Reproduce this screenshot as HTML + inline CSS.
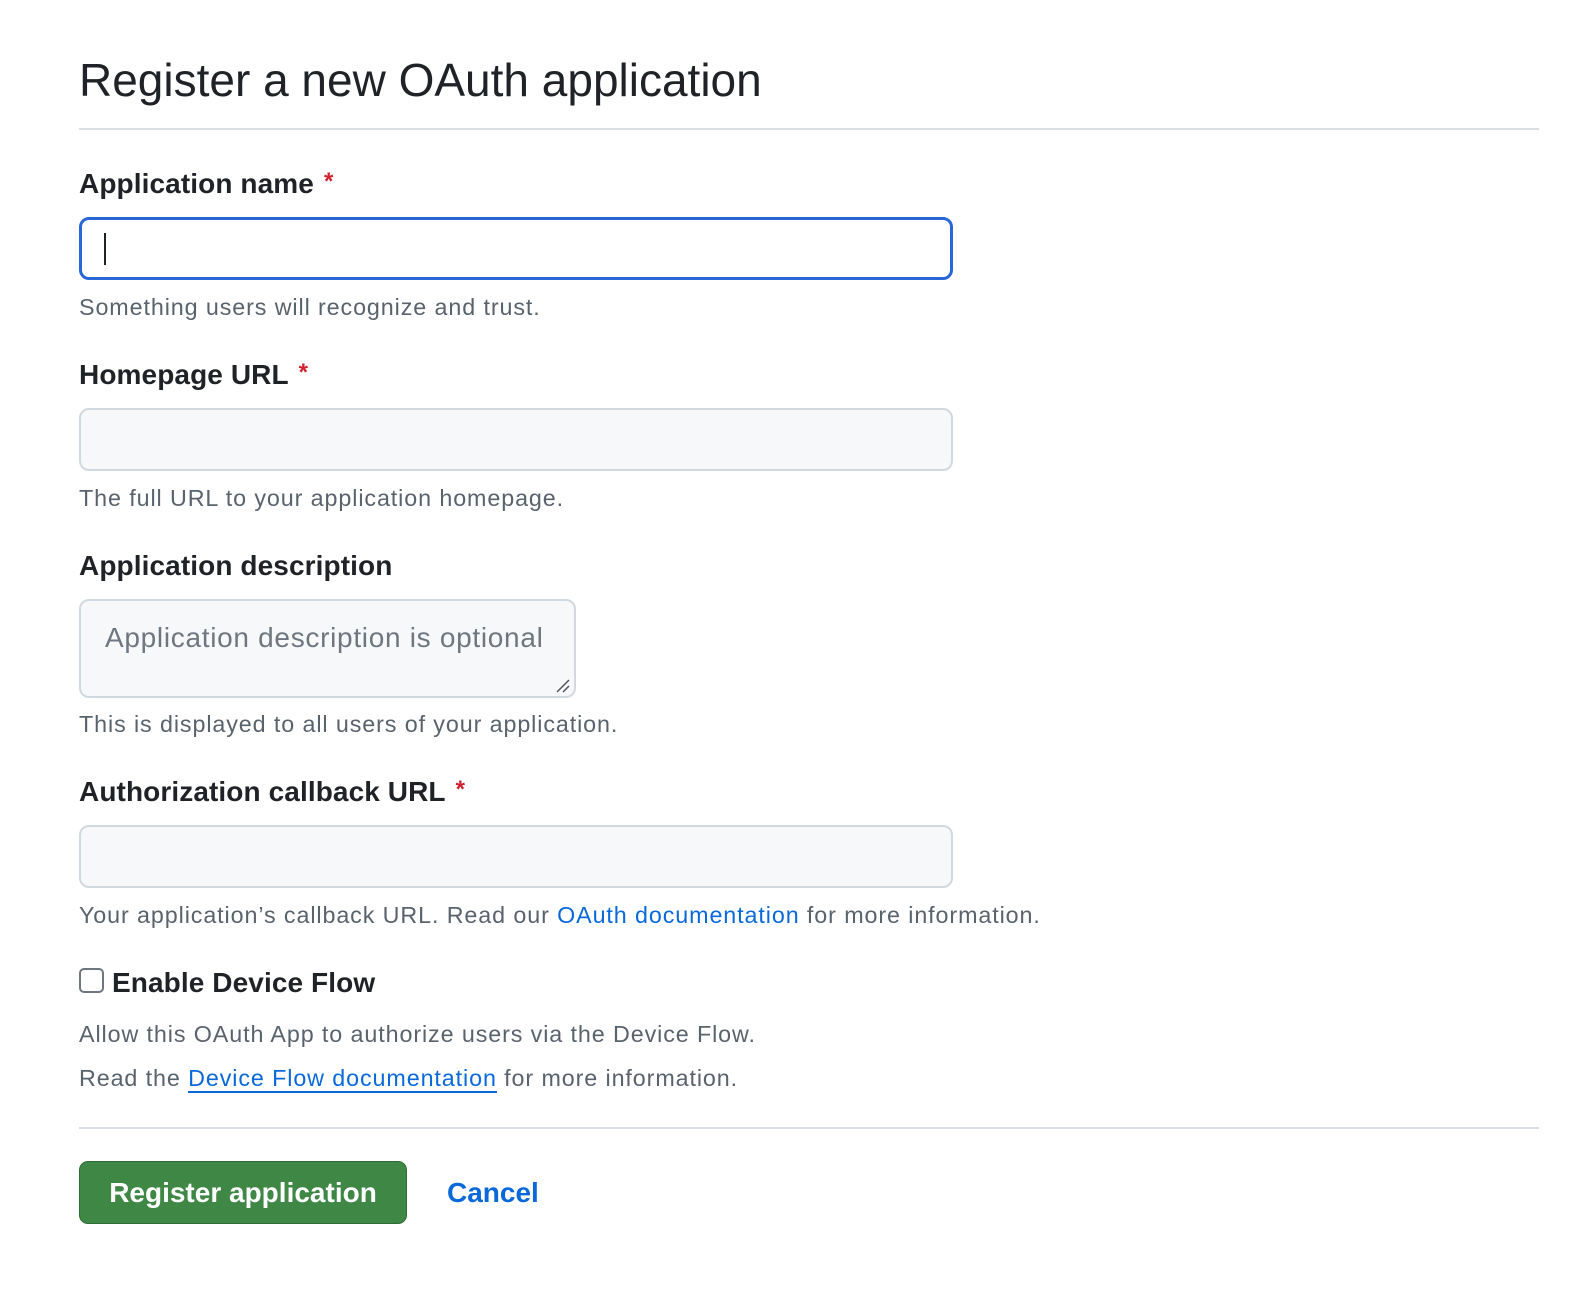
<!DOCTYPE html>
<html><head><meta charset="utf-8"><style>
*{box-sizing:border-box;margin:0;padding:0}
body{width:1578px;height:1294px;background:#fff;position:relative;overflow:hidden;font-family:"Liberation Sans",Arial,sans-serif;color:#1f2328}
.a{position:absolute;white-space:nowrap}
h1{position:absolute;left:79px;top:52px;font-size:46px;font-weight:400;line-height:56px;letter-spacing:0px}
.hr{position:absolute;left:79px;width:1460px;height:2px;background:#d8dee4}
.lbl{position:absolute;left:79px;font-size:28px;font-weight:700;line-height:36px;letter-spacing:0.1px}
.lbl i{color:#cf222e;font-style:normal;font-size:24px;margin-left:10px;position:relative;top:-4px}
.in{position:absolute;left:79px;width:874px;height:63px;background:#f6f8fa;border:2px solid #d1d9e0;border-radius:10px}
.help{position:absolute;left:79px;font-size:23.3px;line-height:30px;color:#59636e;letter-spacing:0.9px}
a{color:#0969da;text-decoration:none}
</style></head><body>
<h1>Register a new OAuth application</h1>
<div class="hr" style="top:128px"></div>

<div class="lbl" style="top:166px">Application name<i>*</i></div>
<div class="in" style="top:217px;background:#fff;border:3px solid #2a67d6"></div>
<div class="a" style="left:104px;top:233px;width:2px;height:32px;background:#1f2328"></div>
<div class="help" style="top:292px">Something users will recognize and trust.</div>

<div class="lbl" style="top:357px">Homepage URL<i>*</i></div>
<div class="in" style="top:408px"></div>
<div class="help" style="top:483px">The full URL to your application homepage.</div>

<div class="lbl" style="top:548px">Application description</div>
<div class="in" style="top:599px;width:497px;height:99px"></div>
<div class="a" style="left:105px;top:620px;font-size:28px;line-height:36px;color:#6e7781;letter-spacing:0.7px">Application description is optional</div>
<svg class="a" style="left:555px;top:678px" width="16" height="16"><path d="M2 14L14 2M8 14L14 8" stroke="#555" stroke-width="1.5"/></svg>
<div class="help" style="top:709px">This is displayed to all users of your application.</div>

<div class="lbl" style="top:774px">Authorization callback URL<i>*</i></div>
<div class="in" style="top:825px"></div>
<div class="help" style="top:900px">Your application’s callback URL. Read our <a>OAuth documentation</a> for more information.</div>

<div class="a" style="left:79px;top:968px;width:25px;height:25px;border:2px solid #6e7781;border-radius:5px;background:#fff"></div>
<div class="lbl" style="left:112px;top:965px">Enable Device Flow</div>
<div class="help" style="top:1019px">Allow this OAuth App to authorize users via the Device Flow.</div>
<div class="help" style="top:1063px">Read the <a style="border-bottom:2px solid #0969da">Device Flow documentation</a> for more information.</div>

<div class="hr" style="top:1127px"></div>
<div class="a" style="left:79px;top:1161px;width:328px;height:63px;background:#3f8745;border:1px solid #2f6b35;border-radius:9px;color:#fff;font-size:28px;font-weight:700;line-height:61px;text-align:center">Register application</div>
<div class="a" style="left:447px;top:1175px;font-size:28px;font-weight:700;line-height:36px;color:#0969da">Cancel</div>
</body></html>
